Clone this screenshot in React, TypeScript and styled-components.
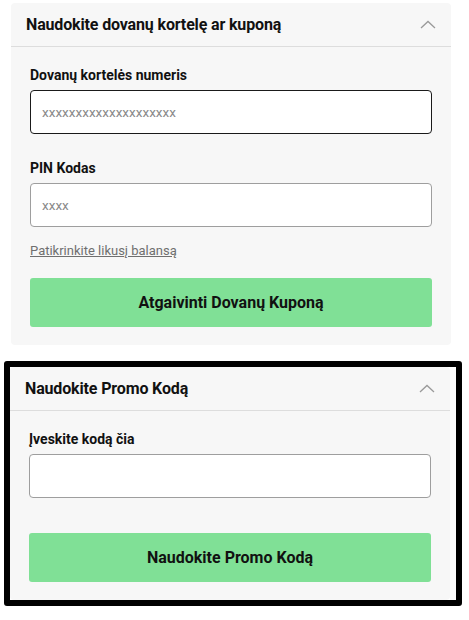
import React from 'react';
import styled, {createGlobalStyle} from "styled-components";

const GlobalStyle = createGlobalStyle`
  body {
    margin: 0;
    font-family: Roboto, "Liberation Sans", Arial, sans-serif;
    background: #ffffff;
    color: #111111;
  }
`

const ChevronUp = () => (
    <svg width="16" height="9" viewBox="0 0 16 9" fill="none">
        <path d="M1 8L8 1.5L15 8" stroke="#9a9a9a" strokeWidth="1.3"/>
    </svg>
)

type FieldProps = {
    label: string
    placeholder?: string
    focused?: boolean
}

const Field = ({label, placeholder, focused}: FieldProps) => (
    <FieldBlock>
        <Label>{label}</Label>
        <Input placeholder={placeholder} $focused={focused}/>
    </FieldBlock>
)

export default function App() {
    return (
        <Page>
            <GlobalStyle/>
            <Card>
                <Header>
                    <HeaderTitle>Naudokite dovanų kortelę ar kuponą</HeaderTitle>
                    <ChevronUp/>
                </Header>
                <Body>
                    <Field label="Dovanų kortelės numeris" placeholder="xxxxxxxxxxxxxxxxxxxx" focused/>
                    <Field label="PIN Kodas" placeholder="xxxx"/>
                    <BalanceLink href="#">Patikrinkite likusį balansą</BalanceLink>
                    <Button $top={20}>Atgaivinti Dovanų Kuponą</Button>
                </Body>
            </Card>

            <Highlight>
                <Card>
                    <Header>
                        <HeaderTitle>Naudokite Promo Kodą</HeaderTitle>
                        <ChevronUp/>
                    </Header>
                    <Body>
                        <Field label="Įveskite kodą čia"/>
                        <Button $top={9}>Naudokite Promo Kodą</Button>
                    </Body>
                </Card>
            </Highlight>
        </Page>
    )
}

const Page = styled.div`
  padding: 3px 0 14px 11px;
`
const Card = styled.section`
  width: 440px;
  background: #f7f7f7;
  border-radius: 4px;
`
const Header = styled.div`
  height: 44px;
  box-sizing: border-box;
  padding: 0 15px;
  display: flex;
  align-items: center;
  justify-content: space-between;
  border-bottom: 1px solid #dddddd;
`
const HeaderTitle = styled.h2`
  margin: 0;
  font-size: 16px;
  font-weight: 700;
  letter-spacing: -0.15px;
  color: #111111;
`
const Body = styled.div`
  padding: 20px 19px 18px;
  display: flex;
  flex-direction: column;
`
const FieldBlock = styled.div`
  display: flex;
  flex-direction: column;
  gap: 6px;
  margin-bottom: 26px;
`
const Label = styled.label`
  font-size: 14px;
  font-weight: 700;
  line-height: 17px;
  color: #111111;
`
const Input = styled.input<{ $focused?: boolean }>`
  height: 44px;
  box-sizing: border-box;
  width: 100%;
  padding: 0 11px;
  border-radius: 4px;
  background: #ffffff;
  border: ${p => p.$focused ? "1.5px solid #1a1a1a" : "1px solid #9e9e9e"};
  font-family: Roboto, "Liberation Sans", Arial, sans-serif;
  font-size: 13.5px;
  outline: none;

  &::placeholder {
    color: #8a8a8a;
  }
`
const BalanceLink = styled.a`
  margin-top: -10px;
  align-self: flex-start;
  font-size: 13px;
  color: #6f6f6f;
  text-decoration: underline;
`
const Button = styled.button<{ $top: number }>`
  margin-top: ${p => p.$top}px;
  height: 49px;
  border: none;
  border-radius: 3px;
  background: #80e096;
  font-family: Roboto, "Liberation Sans", Arial, sans-serif;
  font-size: 16px;
  font-weight: 700;
  color: #111111;
`
const Highlight = styled.div`
  margin: 16px 0 0 -7px;
  width: 446px;
  border: 6px solid #000000;
  border-radius: 3px;
`
